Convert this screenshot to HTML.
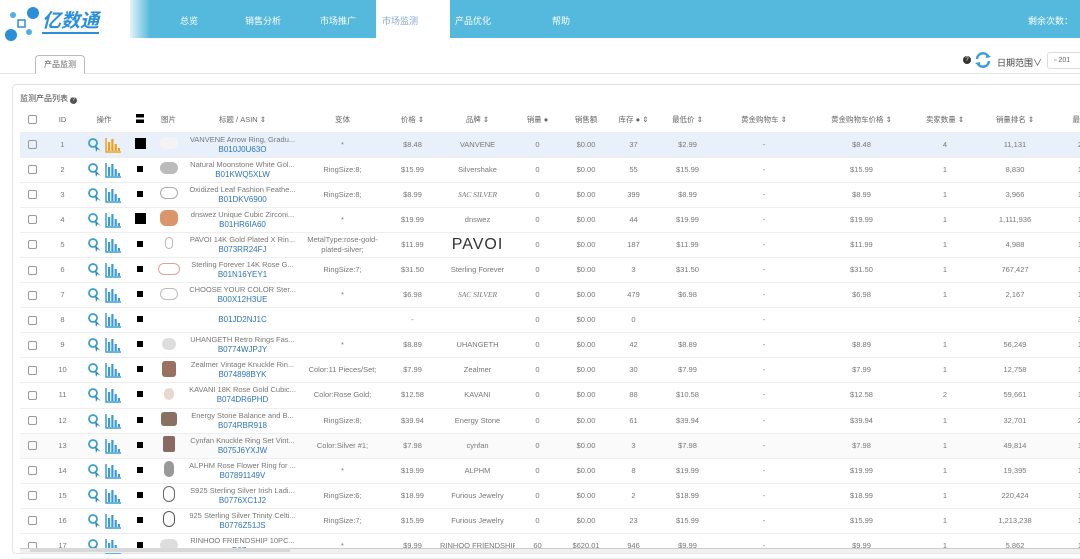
<!DOCTYPE html>
<html><head><meta charset="utf-8"><style>
*{margin:0;padding:0;box-sizing:border-box}
body{width:1080px;height:553px;overflow:hidden;background:#fff;font-family:"Liberation Sans","Noto Sans CJK SC",sans-serif;color:#777;position:relative}
.nav{position:absolute;left:130px;top:0;width:950px;height:38px;background:linear-gradient(90deg,#e6f4fa 0,#54b9dc 20px,#54b9dc)}
.nav span{position:absolute;top:14px;font-size:9px;color:#fff}
.act{position:absolute;left:246px;top:0;width:74px;height:38px;background:#fff}
.tab{position:absolute;left:35px;top:55px;width:50px;height:19px;border:1px solid #bbb;border-bottom:none;border-radius:4px 4px 0 0;font-size:8px;color:#666;text-align:center;line-height:17px;background:#fff}
.hl{position:absolute;left:0;top:73px;width:1080px;height:1px;background:#e4e4e4}
.card{position:absolute;left:12px;top:84px;width:1080px;height:470px;border:1px solid #e4e4e4;border-radius:4px}
table{position:absolute;left:20px;top:108px;border-collapse:collapse;table-layout:fixed;width:1085px;font-size:7.5px}
td{height:25.1px;text-align:center;border-bottom:1px solid #eee;white-space:nowrap;overflow:hidden;line-height:10px}
tr.h td{height:24px;font-size:7.5px;color:#666}
tr.sel td{background:#e8f1fb}
.cb{display:inline-block;width:9px;height:9px;border:1px solid #999;border-radius:2px;vertical-align:middle}
.a{color:#2d74b8;font-size:8px}
.t{color:#777}
.sq{display:inline-block;width:6px;height:6px;background:#000}
.bs{display:inline-block;width:11px;height:11px;background:#000}
svg{vertical-align:middle}
.img{display:inline-block;width:18px;height:12px;border-radius:6px;background:#ccc}
</style></head><body>
<svg width="0" height="0" style="position:absolute"><defs>
<symbol id="m" viewBox="0 0 16 16"><circle cx="6" cy="6" r="4" fill="none" stroke="#3aa0c8" stroke-width="1.8"/><path d="M8 8 L9 15 L10.5 12 L14 14 Z" fill="#2b8ab0"/></symbol>
<symbol id="b" viewBox="0 0 16 16"><path d="M1 1V15H16" fill="none" stroke="currentColor" stroke-width="1.5"/><rect x="3" y="5" width="2.2" height="9" fill="currentColor"/><rect x="6.3" y="2" width="2.2" height="12" fill="currentColor"/><rect x="9.6" y="7" width="2.2" height="7" fill="currentColor"/><rect x="12.8" y="11" width="2.2" height="3" fill="currentColor"/></symbol>
</defs></svg>
<svg style="position:absolute;left:3px;top:5px" width="40" height="40"><circle cx="30" cy="8" r="6" fill="#2a8fd8"/><circle cx="8" cy="30" r="6" fill="#2a8fd8"/><circle cx="10" cy="10" r="3" fill="#4fb0e6"/><circle cx="26" cy="27" r="3" fill="#4fb0e6"/><rect x="15" y="15" width="7" height="7" fill="none" stroke="#2a8fd8" stroke-width="1.5"/></svg>
<div style="position:absolute;left:42px;top:12px;font-size:19px;font-weight:bold;color:#2a8fd8;font-style:italic;border-bottom:2px solid #2a8fd8;line-height:20px">亿数通</div>
<div class="nav"><div class="act"></div>
<span style="left:50px">总览</span><span style="left:115px">销售分析</span><span style="left:190px">市场推广</span><span style="left:252px;color:#8ac">市场监测</span><span style="left:325px">产品优化</span><span style="left:422px">帮助</span><span style="left:898px">剩余次数：</span></div>
<div class="hl"></div>
<div class="tab">产品监测</div>
<div style="position:absolute;left:963px;top:56px;width:8px;height:8px;border-radius:50%;background:#333;color:#fff;font-size:6px;text-align:center;line-height:8px">?</div>
<svg style="position:absolute;left:974px;top:52px" width="18" height="16" viewBox="0 0 18 16"><path d="M3 7A6 6 0 0 1 14 4" fill="none" stroke="#3aa0dc" stroke-width="2.5"/><path d="M15 9A6 6 0 0 1 4 12" fill="none" stroke="#3aa0dc" stroke-width="2.5"/><path d="M12 1L17 5L12 6Z" fill="#3aa0dc"/><path d="M6 15L1 11L6 10Z" fill="#3aa0dc"/></svg>
<div style="position:absolute;left:997px;top:56px;font-size:9px;color:#444">日期范围∨</div>
<div style="position:absolute;left:1047px;top:52px;width:40px;height:17px;border:1px solid #ddd;border-radius:3px;font-size:7px;line-height:15px;padding-left:6px;color:#666">▫ 201</div>
<div class="card"></div>
<div style="position:absolute;left:20px;top:93px;font-size:8px;color:#444">监测产品列表 <span style="display:inline-block;width:7px;height:7px;border-radius:50%;background:#555;color:#fff;font-size:5px;text-align:center;line-height:7px">?</span></div>
<table>
<colgroup><col style="width:25px"><col style="width:35px"><col style="width:48px"><col style="width:24px"><col style="width:33px"><col style="width:115px"><col style="width:85px"><col style="width:55px"><col style="width:75px"><col style="width:45px"><col style="width:52px"><col style="width:43px"><col style="width:65px"><col style="width:88px"><col style="width:107px"><col style="width:60px"><col style="width:80px"><col style="width:50px"></colgroup>
<tr class="h"><td><span class="cb"></span></td><td>ID</td><td>操作</td><td><span style="display:inline-block;width:8px;height:9px;background:linear-gradient(#000 40%,#fff 40%,#fff 60%,#000 60%)"></span></td><td>图片</td><td>标题 / ASIN ⇕</td><td>变体</td><td>价格 ⇕</td><td>品牌 ⇕</td><td>销量 ●</td><td>销售额</td><td>库存 ● ⇕</td><td>最低价 ⇕</td><td>黄金购物车 ⇕</td><td>黄金购物车价格 ⇕</td><td>卖家数量 ⇕</td><td>销量排名 ⇕</td><td>最后</td></tr>
<tr class="sel"><td><span class="cb"></span></td><td>1</td><td><svg width="16" height="16"><use href="#m"/></svg> <svg width="16" height="16" style="color:#f0a020"><use href="#b"/></svg></td><td><span class="bs"></span></td><td><span class="img" style="background:#f4f4f4"></span></td><td><div class="t">VANVENE Arrow Ring, Gradu...</div><div class="a">B010J0U63O</div></td><td>*</td><td>$8.48</td><td>VANVENE</td><td>0</td><td>$0.00</td><td>37</td><td>$2.99</td><td>-</td><td>$8.48</td><td>4</td><td>11,131</td><td>2</td></tr>
<tr><td><span class="cb"></span></td><td>2</td><td><svg width="16" height="16"><use href="#m"/></svg> <svg width="16" height="16" style="color:#3b9bd6"><use href="#b"/></svg></td><td><span class="sq"></span></td><td><span class="img" style="background:#bbb"></span></td><td><div class="t">Natural Moonstone White Gol...</div><div class="a">B01KWQ5XLW</div></td><td>RingSize:8;</td><td>$15.99</td><td>Silvershake</td><td>0</td><td>$0.00</td><td>55</td><td>$15.99</td><td>-</td><td>$15.99</td><td>1</td><td>8,830</td><td>1</td></tr>
<tr><td><span class="cb"></span></td><td>3</td><td><svg width="16" height="16"><use href="#m"/></svg> <svg width="16" height="16" style="color:#3b9bd6"><use href="#b"/></svg></td><td><span class="sq"></span></td><td><span class="img" style="background:none;border:1.5px solid #aaa"></span></td><td><div class="t">Oxidized Leaf Fashion Feathe...</div><div class="a">B01DKV6900</div></td><td>RingSize:8;</td><td>$8.99</td><td style="font-family:'Liberation Serif';font-style:italic">SAC SILVER</td><td>0</td><td>$0.00</td><td>399</td><td>$8.99</td><td>-</td><td>$8.99</td><td>1</td><td>3,966</td><td>1</td></tr>
<tr><td><span class="cb"></span></td><td>4</td><td><svg width="16" height="16"><use href="#m"/></svg> <svg width="16" height="16" style="color:#3b9bd6"><use href="#b"/></svg></td><td><span class="bs"></span></td><td><span class="img" style="background:#d9966a;height:16px"></span></td><td><div class="t">dnswez Unique Cubic Zirconi...</div><div class="a">B01HR6IA60</div></td><td>*</td><td>$19.99</td><td>dnswez</td><td>0</td><td>$0.00</td><td>44</td><td>$19.99</td><td>-</td><td>$19.99</td><td>1</td><td>1,111,936</td><td>1</td></tr>
<tr><td><span class="cb"></span></td><td>5</td><td><svg width="16" height="16"><use href="#m"/></svg> <svg width="16" height="16" style="color:#3b9bd6"><use href="#b"/></svg></td><td><span class="sq"></span></td><td><span class="img" style="background:none;border:1px solid #bbb;width:8px"></span></td><td><div class="t">PAVOI 14K Gold Plated X Rin...</div><div class="a">B073RR24FJ</div></td><td><div>MetalType:rose-gold-</div><div>plated-silver;</div></td><td>$11.99</td><td style="font-size:16px;color:#333;letter-spacing:1px">PAVOI</td><td>0</td><td>$0.00</td><td>187</td><td>$11.99</td><td>-</td><td>$11.99</td><td>1</td><td>4,988</td><td>1</td></tr>
<tr><td><span class="cb"></span></td><td>6</td><td><svg width="16" height="16"><use href="#m"/></svg> <svg width="16" height="16" style="color:#3b9bd6"><use href="#b"/></svg></td><td><span class="sq"></span></td><td><span class="img" style="background:none;border:1.5px solid #e0a0a0;width:22px"></span></td><td><div class="t">Sterling Forever 14K Rose G...</div><div class="a">B01N16YEY1</div></td><td>RingSize:7;</td><td>$31.50</td><td>Sterling Forever</td><td>0</td><td>$0.00</td><td>3</td><td>$31.50</td><td>-</td><td>$31.50</td><td>1</td><td>767,427</td><td>1</td></tr>
<tr><td><span class="cb"></span></td><td>7</td><td><svg width="16" height="16"><use href="#m"/></svg> <svg width="16" height="16" style="color:#3b9bd6"><use href="#b"/></svg></td><td><span class="sq"></span></td><td><span class="img" style="background:none;border:1px solid #bbb"></span></td><td><div class="t">CHOOSE YOUR COLOR Ster...</div><div class="a">B00X12H3UE</div></td><td>*</td><td>$6.98</td><td style="font-family:'Liberation Serif';font-style:italic">SAC SILVER</td><td>0</td><td>$0.00</td><td>479</td><td>$6.98</td><td>-</td><td>$6.98</td><td>1</td><td>2,167</td><td>1</td></tr>
<tr><td><span class="cb"></span></td><td>8</td><td><svg width="16" height="16"><use href="#m"/></svg> <svg width="16" height="16" style="color:#3b9bd6"><use href="#b"/></svg></td><td><span class="sq"></span></td><td></td><td><div class="a">B01JD2NJ1C</div></td><td></td><td>-</td><td></td><td>0</td><td>$0.00</td><td>0</td><td></td><td>-</td><td></td><td></td><td></td><td>3</td></tr>
<tr><td><span class="cb"></span></td><td>9</td><td><svg width="16" height="16"><use href="#m"/></svg> <svg width="16" height="16" style="color:#3b9bd6"><use href="#b"/></svg></td><td><span class="sq"></span></td><td><span class="img" style="background:#ddd;width:14px"></span></td><td><div class="t">UHANGETH Retro Rings Fas...</div><div class="a">B0774WJPJY</div></td><td>*</td><td>$8.89</td><td>UHANGETH</td><td>0</td><td>$0.00</td><td>42</td><td>$8.89</td><td>-</td><td>$8.89</td><td>1</td><td>56,249</td><td>1</td></tr>
<tr><td><span class="cb"></span></td><td>10</td><td><svg width="16" height="16"><use href="#m"/></svg> <svg width="16" height="16" style="color:#3b9bd6"><use href="#b"/></svg></td><td><span class="sq"></span></td><td><span class="img" style="background:#9a7060;width:14px;height:16px;border-radius:3px"></span></td><td><div class="t">Zealmer Vintage Knuckle Rin...</div><div class="a">B074898BYK</div></td><td>Color:11 Pieces/Set;</td><td>$7.99</td><td>Zealmer</td><td>0</td><td>$0.00</td><td>30</td><td>$7.99</td><td>-</td><td>$7.99</td><td>1</td><td>12,758</td><td>1</td></tr>
<tr><td><span class="cb"></span></td><td>11</td><td><svg width="16" height="16"><use href="#m"/></svg> <svg width="16" height="16" style="color:#3b9bd6"><use href="#b"/></svg></td><td><span class="sq"></span></td><td><span class="img" style="background:#e8d8d0;width:10px"></span></td><td><div class="t">KAVANI 18K Rose Gold Cubic...</div><div class="a">B074DR6PHD</div></td><td>Color:Rose Gold;</td><td>$12.58</td><td>KAVANI</td><td>0</td><td>$0.00</td><td>88</td><td>$10.58</td><td>-</td><td>$12.58</td><td>2</td><td>59,661</td><td>1</td></tr>
<tr><td><span class="cb"></span></td><td>12</td><td><svg width="16" height="16"><use href="#m"/></svg> <svg width="16" height="16" style="color:#3b9bd6"><use href="#b"/></svg></td><td><span class="sq"></span></td><td><span class="img" style="background:#8a7060;width:16px;height:14px;border-radius:3px"></span></td><td><div class="t">Energy Stone Balance and B...</div><div class="a">B074RBR918</div></td><td>RingSize:8;</td><td>$39.94</td><td>Energy Stone</td><td>0</td><td>$0.00</td><td>61</td><td>$39.94</td><td>-</td><td>$39.94</td><td>1</td><td>32,701</td><td>2</td></tr>
<tr style="background:#fafafa"><td><span class="cb"></span></td><td>13</td><td><svg width="16" height="16"><use href="#m"/></svg> <svg width="16" height="16" style="color:#3b9bd6"><use href="#b"/></svg></td><td><span class="sq"></span></td><td><span class="img" style="background:#8a6a60;width:12px;height:16px;border-radius:2px"></span></td><td><div class="t">Cynfan Knuckle Ring Set Vint...</div><div class="a">B075J6YXJW</div></td><td>Color:Silver #1;</td><td>$7.98</td><td>cynfan</td><td>0</td><td>$0.00</td><td>3</td><td>$7.98</td><td>-</td><td>$7.98</td><td>1</td><td>49,814</td><td>1</td></tr>
<tr><td><span class="cb"></span></td><td>14</td><td><svg width="16" height="16"><use href="#m"/></svg> <svg width="16" height="16" style="color:#3b9bd6"><use href="#b"/></svg></td><td><span class="sq"></span></td><td><span class="img" style="background:#999;width:10px;height:16px"></span></td><td><div class="t">ALPHM Rose Flower Ring for ...</div><div class="a">B07891149V</div></td><td>*</td><td>$19.99</td><td>ALPHM</td><td>0</td><td>$0.00</td><td>8</td><td>$19.99</td><td>-</td><td>$19.99</td><td>1</td><td>19,395</td><td>1</td></tr>
<tr><td><span class="cb"></span></td><td>15</td><td><svg width="16" height="16"><use href="#m"/></svg> <svg width="16" height="16" style="color:#3b9bd6"><use href="#b"/></svg></td><td><span class="sq"></span></td><td><span class="img" style="background:none;border:1.5px solid #666;width:12px;height:16px"></span></td><td><div class="t">S925 Sterling Silver Irish Ladi...</div><div class="a">B0776XC1J2</div></td><td>RingSize:6;</td><td>$18.99</td><td>Furious Jewelry</td><td>0</td><td>$0.00</td><td>2</td><td>$18.99</td><td>-</td><td>$18.99</td><td>1</td><td>220,424</td><td>1</td></tr>
<tr><td><span class="cb"></span></td><td>16</td><td><svg width="16" height="16"><use href="#m"/></svg> <svg width="16" height="16" style="color:#3b9bd6"><use href="#b"/></svg></td><td><span class="sq"></span></td><td><span class="img" style="background:none;border:1.5px solid #555;width:12px;height:16px"></span></td><td><div class="t">925 Sterling Silver Trinity Celti...</div><div class="a">B0776Z51JS</div></td><td>RingSize:7;</td><td>$15.99</td><td>Furious Jewelry</td><td>0</td><td>$0.00</td><td>23</td><td>$15.99</td><td>-</td><td>$15.99</td><td>1</td><td>1,213,238</td><td>1</td></tr>
<tr><td><span class="cb"></span></td><td>17</td><td><svg width="16" height="16"><use href="#m"/></svg> <svg width="16" height="16" style="color:#3b9bd6"><use href="#b"/></svg></td><td><span class="sq"></span></td><td><span class="img" style="background:#ddd"></span></td><td><div class="t">RINHOO FRIENDSHIP 10PC...</div><div class="a">B07...</div></td><td>*</td><td>$9.99</td><td>RINHOO FRIENDSHIP</td><td>60</td><td>$620.01</td><td>946</td><td>$9.99</td><td>-</td><td>$9.99</td><td>1</td><td>5,862</td><td>1</td></tr>
</table>
<div style="position:absolute;left:20px;top:548px;width:1060px;height:5px;background:#f0f0f0;border-top:1px solid #ccc"></div>
<div style="position:absolute;left:30px;top:548px;width:260px;height:4px;background:#d8d8d8"></div>
</body></html>
